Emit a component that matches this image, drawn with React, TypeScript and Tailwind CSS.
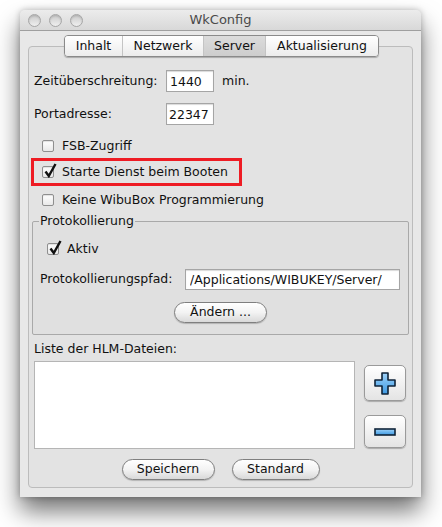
import React from "react";

const font = "font-['DejaVu_Sans',sans-serif]";

function Check({ on }: { on?: boolean }) {
  return (
    <span className="relative w-[12px] h-[12px] shrink-0 rounded-[2px] border border-[#8f8f8f] bg-gradient-to-b from-white to-[#e9e9e9] shadow-[inset_0_1px_1px_rgba(0,0,0,0.12)]">
      {on && (
        <svg className="absolute left-[1px] -top-[4px]" width="13" height="15" viewBox="0 0 13 15">
          <path d="M1.5 8.5 L4.8 13 L11.5 1" stroke="#111" strokeWidth="2.4" fill="none" />
        </svg>
      )}
    </span>
  );
}

function Pill({ w, children }: { w: string; children: React.ReactNode }) {
  return (
    <button
      className={`${w} h-[21px] rounded-full border border-[#7f7f7f] bg-gradient-to-b from-white via-[#f3f3f3] to-[#d9d9d9] shadow-[0_1px_1px_rgba(0,0,0,0.2)] text-[12.5px] text-[#111] leading-none flex items-center justify-center`}
    >
      {children}
    </button>
  );
}

function Light() {
  return (
    <span className="w-[13px] h-[13px] rounded-full border border-[#a6a6a6] bg-gradient-to-b from-[#c9c9c9] to-[#f0f0f0] shadow-[inset_0_1px_2px_rgba(0,0,0,0.15)]" />
  );
}

export default function App() {
  const tabs = [
    { label: "Inhalt", w: "w-[57px]" },
    { label: "Netzwerk", w: "w-[81px]" },
    { label: "Server", w: "w-[62px]", on: true },
    { label: "Aktualisierung", w: "w-[113px]" },
  ];

  return (
    <div className={`w-[442px] h-[527px] bg-white pl-[20px] pt-[10px] ${font} text-[#111]`}>
      <div className="w-[401px] h-[487px] flex flex-col bg-[#e8e8e8] rounded-t-[5px] shadow-[0_14px_24px_rgba(0,0,0,0.55),0_0_6px_rgba(0,0,0,0.25)]">
        {/* title bar */}
        <div className="relative h-[21px] shrink-0 flex items-center rounded-t-[5px] border-b border-[#9f9f9f] bg-gradient-to-b from-[#ececec] to-[#d8d8d8]">
          <div className="flex gap-[8px] pl-[8px]">
            <Light />
            <Light />
            <Light />
          </div>
          <div className="absolute inset-0 flex items-center justify-center text-[13px] text-[#4a4a4a]">
            WkConfig
          </div>
        </div>

        {/* tabs */}
        <div className="relative z-10 mt-[4px] flex justify-center">
          <div className="flex h-[22px] rounded-[4px] border border-[#8a8a8a] overflow-hidden shadow-[0_1px_1px_rgba(0,0,0,0.25)] ml-[2px]">
            {tabs.map((t, i) => (
              <div
                key={t.label}
                className={`${t.w} flex items-center justify-center text-[12.5px] ${i > 0 ? "border-l border-[#c4c4c4]" : ""} ${
                  t.on ? "bg-gradient-to-b from-[#dcdcdc] to-[#cdcdcd]" : "bg-gradient-to-b from-white to-[#ececec]"
                }`}
              >
                {t.label}
              </div>
            ))}
          </div>
        </div>

        {/* tab box */}
        <div className="-mt-[11px] mx-[8px] mb-[12px] flex-1 rounded-[4px] border border-[#bcbcbc] bg-[#e3e3e3] pl-[5px] pt-[23px] pb-[7px] text-[12.5px]">
          <div className="flex items-center h-[22px]">
            <span className="w-[132px]">Zeitüberschreitung:</span>
            <input
              readOnly
              value="1440"
              className="w-[48px] h-[22px] border border-[#a5a5a5] bg-white px-[3px] text-[12.5px] outline-none shadow-[inset_0_1px_1px_rgba(0,0,0,0.15)]"
            />
            <span className="ml-[8px]">min.</span>
          </div>
          <div className="flex items-center h-[22px] mt-[11px]">
            <span className="w-[132px]">Portadresse:</span>
            <input
              readOnly
              value="22347"
              className="w-[48px] h-[22px] border border-[#a5a5a5] bg-white px-[2px] text-[12.5px] outline-none shadow-[inset_0_1px_1px_rgba(0,0,0,0.15)]"
            />
          </div>

          <div className="flex items-center gap-[8px] h-[14px] mt-[14px] pl-[8px]">
            <Check />
            <span>FSB-Zugriff</span>
          </div>
          <div className="flex items-center gap-[8px] w-[211px] h-[28px] mt-[5px] -ml-[3px] border-[3px] border-[#ee1c24] pl-[8px]">
            <Check on />
            <span>Starte Dienst beim Booten</span>
          </div>
          <div className="flex items-center gap-[8px] h-[14px] mt-[7px] pl-[8px]">
            <Check />
            <span>Keine WibuBox Programmierung</span>
          </div>

          <fieldset className="w-[377px] -ml-[2px] mt-[6px] border border-[#a9a9a9] bg-[#e0e0e0] rounded-[2px] pl-[7px] pb-[11px]">
            <legend className="px-[1px] leading-[16px] -ml-[1px]">Protokollierung</legend>
            <div className="flex items-center gap-[8px] h-[14px] mt-[13px] pl-[7px]">
              <Check on />
              <span>Aktiv</span>
            </div>
            <div className="flex items-center h-[21px] mt-[13px]">
              <span className="w-[145px]">Protokollierungspfad:</span>
              <input
                readOnly
                value="/Applications/WIBUKEY/Server/"
                className="w-[215px] h-[21px] border border-[#a5a5a5] bg-white px-[4px] text-[12.5px] outline-none shadow-[inset_0_1px_1px_rgba(0,0,0,0.15)]"
              />
            </div>
            <div className="flex justify-center mt-[12px] pr-[7px]">
              <Pill w="w-[93px]">Ändern ...</Pill>
            </div>
          </fieldset>

          <div className="h-[14px] mt-[7px] flex items-center">Liste der HLM-Dateien:</div>

          <div className="flex mt-[5px] gap-[9px]">
            <div className="w-[321px] h-[88px] border border-[#b5b5b5] bg-white" />
            <div className="flex flex-col pt-[4px] gap-[14px]">
              <button className="w-[42px] h-[36px] rounded-[5px] border border-[#9a9a9a] bg-gradient-to-b from-white to-[#e4e4e4] shadow-[0_1px_1px_rgba(0,0,0,0.25)] flex items-center justify-center">
                <svg width="22" height="23" viewBox="0 0 22 23">
                  <defs>
                    <linearGradient id="pl" x1="0" y1="0" x2="0" y2="1">
                      <stop offset="0" stopColor="#9fd3fa" />
                      <stop offset="1" stopColor="#3d99e2" />
                    </linearGradient>
                  </defs>
                  <path
                    d="M8 1 H14 V8 H21 V14 H14 V22 H8 V14 H1 V8 H8 Z"
                    fill="url(#pl)"
                    stroke="#0f2338"
                    strokeWidth="1.6"
                    strokeLinejoin="round"
                  />
                </svg>
              </button>
              <button className="w-[42px] h-[33px] rounded-[5px] border border-[#9a9a9a] bg-gradient-to-b from-white to-[#e4e4e4] shadow-[0_1px_1px_rgba(0,0,0,0.25)] flex items-center justify-center">
                <svg width="22" height="8" viewBox="0 0 22 8">
                  <defs>
                    <linearGradient id="mn" x1="0" y1="0" x2="0" y2="1">
                      <stop offset="0" stopColor="#9fd3fa" />
                      <stop offset="1" stopColor="#3d99e2" />
                    </linearGradient>
                  </defs>
                  <rect x="1" y="1" width="20" height="6" fill="url(#mn)" stroke="#0f2338" strokeWidth="1.6" />
                </svg>
              </button>
            </div>
          </div>

          <div className="flex justify-center gap-[17px] mt-[10px] pr-[5px]">
            <Pill w="w-[93px]">Speichern</Pill>
            <Pill w="w-[88px]">Standard</Pill>
          </div>
        </div>
      </div>
    </div>
  );
}
